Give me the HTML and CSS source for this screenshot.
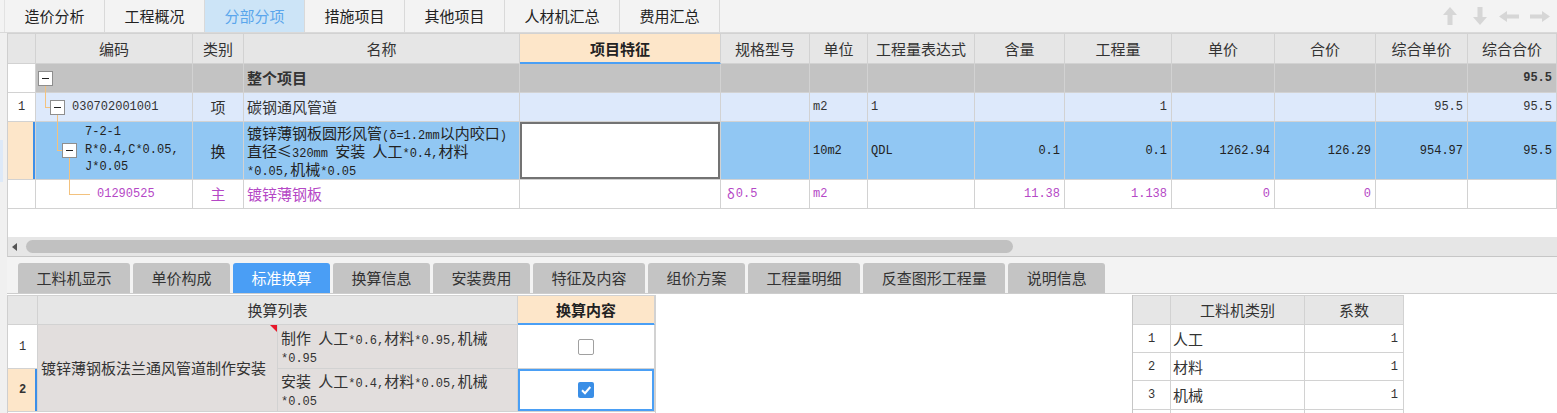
FILE: index.html
```html
<!DOCTYPE html>
<html lang="zh-CN">
<head>
<meta charset="utf-8">
<title>分部分项</title>
<link rel="stylesheet" href="styles.css">
</head>
<body>
<div class="app">
  <div class="topbar">
    <div class="ttabs">
      <div class="ttab first">造价分析</div>
      <div class="ttab">工程概况</div>
      <div class="ttab active">分部分项</div>
      <div class="ttab">措施项目</div>
      <div class="ttab">其他项目</div>
      <div class="ttab wide">人材机汇总</div>
      <div class="ttab">费用汇总</div>
    </div>
    <div class="arrows">
      <svg class="ar-up" width="14" height="18" viewBox="0 0 14 18"><path d="M7 0 L14 8 L9.5 8 L9.5 18 L4.5 18 L4.5 8 L0 8 Z"/></svg>
      <svg class="ar-down" width="14" height="18" viewBox="0 0 14 18"><path d="M7 18 L14 10 L9.5 10 L9.5 0 L4.5 0 L4.5 10 L0 10 Z"/></svg>
      <svg class="ar-left" width="20" height="11" viewBox="0 0 20 11"><path d="M0 5.5 L8 0 L8 3.5 L20 3.5 L20 7.5 L8 7.5 L8 11 Z"/></svg>
      <svg class="ar-right" width="20" height="11" viewBox="0 0 20 11"><path d="M20 5.5 L12 0 L12 3.5 L0 3.5 L0 7.5 L12 7.5 L12 11 Z"/></svg>
    </div>
  </div>

  <div class="main">
    <div class="side"><div class="side-mark"></div></div>
    <div class="content">
      <div class="upper">
        <div class="grid ug">
          <div class="h"></div>
          <div class="h">编码</div>
          <div class="h">类别</div>
          <div class="h">名称</div>
          <div class="h hsel">项目特征</div>
          <div class="h">规格型号</div>
          <div class="h">单位</div>
          <div class="h">工程量表达式</div>
          <div class="h">含量</div>
          <div class="h">工程量</div>
          <div class="h">单价</div>
          <div class="h">合价</div>
          <div class="h">综合单价</div>
          <div class="h">综合合价</div>

          <div class="rn"></div>
          <div class="r0 code p0"><span class="tb"></span><i class="tl l0v"></i></div>
          <div class="r0"></div>
          <div class="r0 b">整个项目</div>
          <div class="r0"></div>
          <div class="r0"></div>
          <div class="r0"></div>
          <div class="r0"></div>
          <div class="r0"></div>
          <div class="r0"></div>
          <div class="r0"></div>
          <div class="r0"></div>
          <div class="r0"></div>
          <div class="r0 num b">95.5</div>

          <div class="rn m">1</div>
          <div class="r1 code p1"><i class="tl l1v"></i><i class="tl l1h"></i><span class="tb"></span><span class="m ct1">030702001001</span><i class="tl l1d"></i></div>
          <div class="r1 cen">项</div>
          <div class="r1">碳钢通风管道</div>
          <div class="r1"></div>
          <div class="r1"></div>
          <div class="r1 m">m2</div>
          <div class="r1 m">1</div>
          <div class="r1"></div>
          <div class="r1 num">1</div>
          <div class="r1"></div>
          <div class="r1"></div>
          <div class="r1 num">95.5</div>
          <div class="r1 num">95.5</div>

          <div class="rn rsel"></div>
          <div class="r2 code p2"><i class="tl l2v"></i><i class="tl l2h"></i><span class="tb"></span><span class="m mtx ct2">7-2-1<br>R*0.4,C*0.05,<br>J*0.05</span><i class="tl l2d"></i></div>
          <div class="r2 cen">换</div>
          <div class="r2 open"><span class="tx">镀锌薄钢板圆形风管<span class="m">(δ=1.2mm</span>以内咬口<span class="m">)</span><br>直径≤<span class="m">320mm  </span>安装<span class="m"> </span>人工<span class="m">*0.4,</span>材料<br><span class="m">*0.05,</span>机械<span class="m">*0.05</span></span></div>
          <div class="edit"></div>
          <div class="r2"></div>
          <div class="r2 m">10m2</div>
          <div class="r2 m">QDL</div>
          <div class="r2 num">0.1</div>
          <div class="r2 num">0.1</div>
          <div class="r2 num">1262.94</div>
          <div class="r2 num">126.29</div>
          <div class="r2 num">954.97</div>
          <div class="r2 num">95.5</div>

          <div class="rn"></div>
          <div class="r3 code p3"><i class="tl l3v"></i><i class="tl l3h"></i><span class="m">01290525</span></div>
          <div class="r3 cen">主</div>
          <div class="r3">镀锌薄钢板</div>
          <div class="r3"></div>
          <div class="r3"><span class="dl">δ</span><span class="m">0.5</span></div>
          <div class="r3 m">m2</div>
          <div class="r3"></div>
          <div class="r3 num">11.38</div>
          <div class="r3 num">1.138</div>
          <div class="r3 num">0</div>
          <div class="r3 num">0</div>
          <div class="r3"></div>
          <div class="r3"></div>
        </div>
        <div class="spacer"></div>
        <div class="hscroll"><span class="sarrow"></span><div class="thumb"></div></div>
      </div>

      <div class="btabs">
        <div class="btab">工料机显示</div>
        <div class="btab">单价构成</div>
        <div class="btab active">标准换算</div>
        <div class="btab">换算信息</div>
        <div class="btab">安装费用</div>
        <div class="btab">特征及内容</div>
        <div class="btab">组价方案</div>
        <div class="btab">工程量明细</div>
        <div class="btab">反查图形工程量</div>
        <div class="btab">说明信息</div>
      </div>

      <div class="lower">
        <div class="grid lg">
          <div class="h"></div>
          <div class="h span2">换算列表</div>
          <div class="h hsel">换算内容</div>

          <div class="rn m">1</div>
          <div class="merged">镀锌薄钢板法兰通风管道制作安装</div>
          <div class="lc"><span class="tx">制作<span class="m"> </span>人工<span class="m">*0.6,</span>材料<span class="m">*0.95,</span>机械<br><span class="m">*0.95</span></span></div>
          <div class="ck"><span class="cbox"></span></div>

          <div class="rn rsel2 m b">2</div>
          <div class="lc"><span class="tx">安装<span class="m"> </span>人工<span class="m">*0.4,</span>材料<span class="m">*0.05,</span>机械<br><span class="m">*0.05</span></span></div>
          <div class="ck cksel"><span class="cbox on"><svg width="16" height="16" viewBox="0 0 16 16"><path d="M4 8.2 L7 11.2 L12.3 5" stroke="#fff" stroke-width="2" fill="none"/></svg></span></div>
        </div>
        <div class="mid"></div>
        <div class="rpanel">
          <div class="grid rg">
            <div class="h"></div>
            <div class="h">工料机类别</div>
            <div class="h">系数</div>

            <div class="rn m">1</div>
            <div>人工</div>
            <div class="num">1</div>

            <div class="rn m">2</div>
            <div>材料</div>
            <div class="num">1</div>

            <div class="rn m">3</div>
            <div>机械</div>
            <div class="num">1</div>

            <div class="rn"></div>
            <div></div>
            <div></div>
          </div>
        </div>
      </div>
    </div>
  </div>
</div>
</body>
</html>
```

FILE: styles.css
```css
* { box-sizing: border-box; margin: 0; padding: 0; }

html, body {
  width: 1557px;
  height: 413px;
  overflow: hidden;
  background: #f3f3f3;
}

body {
  font-family: "Noto Sans CJK SC", "Noto Sans", sans-serif;
  font-size: 15px;
  line-height: 18px;
  color: #333;
}

.app {
  display: flex;
  flex-direction: column;
  height: 413px;
}

/* ---------- top tab bar ---------- */
.topbar {
  height: 33px;
  flex: none;
  display: flex;
  justify-content: space-between;
  background: #f3f3f3;
  border-bottom: 1px solid #d9d9d9;
}

.ttabs {
  display: flex;
  padding-left: 4px;
}

.ttab {
  width: 100px;
  border-right: 1px solid #d9d9d9;
  display: flex;
  align-items: center;
  justify-content: center;
  color: #222;
}

.ttab.first {
  width: 101px;
  border-left: 1px solid #e2e2e2;
}

.ttab.wide { width: 115px; }

.ttab.active {
  background: #cce4f7;
  color: #5aa6ec;
}

.arrows {
  display: flex;
  align-items: center;
  padding-right: 7px;
}

.arrows svg { fill: #d6d6d6; }
.ar-down { margin-left: 16px; }
.ar-left { margin-left: 12px; }
.ar-right { margin-left: 11px; }

/* ---------- main ---------- */
.main {
  flex: 1;
  display: flex;
  min-height: 0;
}

.side {
  width: 7px;
  flex: none;
  background: #f0f0f0;
}

.side-mark {
  margin-top: 107px;
  width: 3px;
  height: 42px;
  background: #dde9f8;
}

.content {
  flex: 1;
  display: flex;
  flex-direction: column;
  min-width: 0;
}

.upper {
  height: 224px;
  flex: none;
  display: flex;
  flex-direction: column;
  background: #fff;
  border-left: 1px solid #cfcfcf;
  border-bottom: 1px solid #c6c6c6;
}

/* ---------- generic grid ---------- */
.grid {
  display: grid;
  border-top: 1px solid #d2d2d2;
}

.grid > div {
  border-right: 1px solid #d2d2d2;
  border-bottom: 1px solid #d2d2d2;
  display: flex;
  align-items: center;
  padding: 0 3px;
  white-space: nowrap;
  overflow: hidden;
  position: relative;
}

.grid > .h {
  background: #e6e6e6;
  justify-content: center;
  color: #333;
}

.grid > .hsel {
  background: #fde6c9;
  font-weight: bold;
  color: #222;
  border-bottom-color: #4a9ff5;
  box-shadow: inset 0 -1px 0 #4a9ff5;
}

.grid > .rn {
  background: #fff;
  justify-content: center;
}

.grid > .num {
  justify-content: flex-end;
  font-family: "Liberation Mono", "DejaVu Sans Mono", monospace;
  font-size: 12px;
  padding-right: 4px;
}

.grid > .cen { justify-content: center; }

.grid > .open { overflow: visible; }

.m {
  font-family: "Liberation Mono", "DejaVu Sans Mono", monospace;
  font-size: 12px;
}

.b { font-weight: bold; }

.tx {
  display: block;
  line-height: 17.5px;
  white-space: nowrap;
}

.tx .m { line-height: 12px; }

.mtx {
  display: block;
  line-height: 17.5px;
}

/* ---------- upper grid ---------- */
.ug {
  grid-template-columns: 28px 157px 51px 276px 201px 89px 58px 107px 90px 107px 103px 101px 92px 89px;
  grid-template-rows: 30px 29px 29px 58px 29px;
}

.ug > .r0 { background: #c3c3c3; }
.ug > .r1 { background: #dde9fb; }
.ug > .r2 { background: #91c7f3; color: #222; }
.ug > .r3 { background: #fff; color: #b548c6; }

.ug > .rsel {
  background: #fde6c9;
  box-shadow: inset -2px 0 0 #3d8fe8;
}

.ug > .edit {
  background: #fff;
  box-shadow: inset 0 0 0 2px #737373;
}

.ug > .code { overflow: visible; }
.ug > .p0 { padding-left: 2px; }
.ug > .p1 { padding-left: 14px; }
.ug > .p2 { padding-left: 26px; }
.ug > .p3 { padding-left: 61px; }

.ct1 { margin-left: 7px; }
.ct2 { margin-left: 8px; }

.tb {
  width: 15px;
  height: 15px;
  flex: none;
  border: 1px solid #8e8e8e;
  background: #fff;
  position: relative;
  z-index: 2;
}

.tb::after {
  content: "";
  position: absolute;
  left: 3px;
  top: 6px;
  width: 7px;
  height: 1px;
  background: #222;
}

.tl {
  position: absolute;
  background: #f3c27e;
  z-index: 1;
}

.l0v { left: 9px; top: 21px; bottom: -1px; width: 1px; }
.l1v { left: 9px; top: -1px; height: 15px; width: 1px; }
.l1h { left: 9px; top: 14px; width: 5px; height: 1px; }
.l1d { left: 21px; top: 21px; bottom: -1px; width: 1px; }
.l2v { left: 21px; top: -1px; height: 30px; width: 1px; }
.l2h { left: 21px; top: 28px; width: 5px; height: 1px; }
.l2d { left: 33px; top: 35px; bottom: -1px; width: 1px; }
.l3v { left: 33px; top: -1px; height: 15px; width: 1px; }
.l3h { left: 33px; top: 14px; width: 21px; height: 1px; }

.dl { font-size: 13px; margin: 0 1px 0 3px; }

.spacer { flex: 1; }

.hscroll {
  height: 19px;
  flex: none;
  background: #e6e6e6;
  display: flex;
  align-items: center;
}

.sarrow {
  margin-left: 4px;
  width: 0;
  height: 0;
  border-top: 4px solid transparent;
  border-bottom: 4px solid transparent;
  border-right: 5px solid #555;
}

.thumb {
  margin-left: 9px;
  width: 987px;
  height: 13px;
  border-radius: 7px;
  background: #c1c1c1;
}

/* ---------- lower tabs ---------- */
.btabs {
  height: 37px;
  flex: none;
  display: flex;
  align-items: flex-end;
  padding-left: 11px;
  background: #f3f3f3;
  border-bottom: 1px solid #cdcdcd;
}

.btab {
  height: 30px;
  padding: 0 18.5px;
  margin-right: 3px;
  background: #c4c4c4;
  border-radius: 3px 3px 0 0;
  display: flex;
  align-items: center;
  color: #333;
}

.btab.active {
  background: #4a9ef5;
  color: #fff;
}

/* ---------- lower panes ---------- */
.lower {
  flex: 1;
  display: flex;
  padding-top: 1px;
  background: #fff;
  min-height: 0;
  overflow: hidden;
}

.lg {
  flex: none;
  border-left: 1px solid #cfcfcf;
  grid-template-columns: 30px 240px 240px 137px;
  grid-template-rows: 29px 44px 43px;
}

.lg > .span2 { grid-column: span 2; }

.lg > .merged {
  grid-row: span 2;
  background: #e2dedd;
}

.lg > .merged::after {
  content: "";
  position: absolute;
  top: 0;
  right: 0;
  border-top: 7px solid #e8182a;
  border-left: 7px solid transparent;
}

.lg > .lc { background: #e2dedd; }

.lg > .ck { justify-content: center; background: #fff; }

.lg > .cksel { box-shadow: inset 0 0 0 2px #4a9ff5; }

.lg > .rsel2 {
  background: #fde6c9;
  box-shadow: inset -2px 0 0 #3d8fe8;
}

.cbox {
  width: 16px;
  height: 16px;
  border: 1px solid #a0a0a0;
  border-radius: 2px;
  background: #fff;
  display: flex;
}

.cbox.on {
  border: none;
  background: #3a8ee6;
}

.mid {
  width: 478px;
  flex: none;
  background: #fff;
  border-left: 1px solid #d2d2d2;
  border-right: 1px solid #c6c6c6;
}

.rpanel {
  flex: 1;
  background: #fff;
}

.rg {
  width: 271px;
  grid-template-columns: 38px 134px 99px;
  grid-template-rows: 29px 28px 28px 29px 28px;
}

.rg > .num { padding-right: 5px; }
.rg > div:not(.h):not(.rn):not(.num) { padding-left: 2px; }
```
